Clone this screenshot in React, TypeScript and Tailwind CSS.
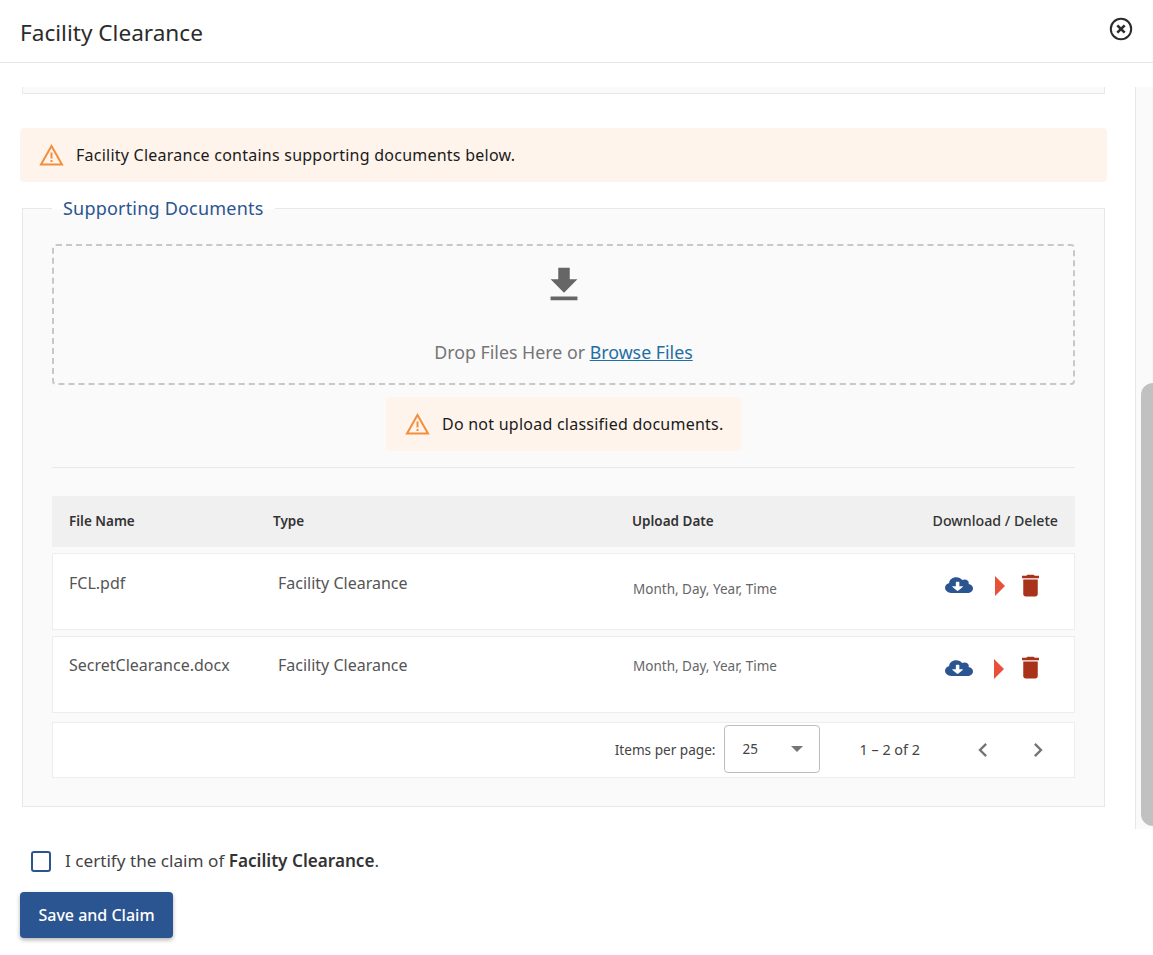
import React from 'react';
import { FaCloudDownloadAlt } from 'react-icons/fa';
import { MdChevronLeft, MdChevronRight, MdDelete, MdFileDownload } from 'react-icons/md';

const WarnIcon = ({ className }: { className: string }) => (
  <svg viewBox="0 0 24 22" className={className} fill="none" stroke="#f28e3c" strokeWidth="2" strokeLinejoin="miter">
    <path d="M12 2 L22.5 20.5 H1.5 Z" />
    <path d="M12 8.5 V14.5" />
    <path d="M12 16 V18" />
  </svg>
);

const files = [
  { name: 'FCL.pdf', textPad: 'pt-[19px]', datePad: 'pt-[26px]', arrow: 'ml-[22px]', trash: 'ml-[11px] -mt-[1px]' },
  { name: 'SecretClearance.docx', textPad: 'pt-[18px]', datePad: 'pt-[20px]', arrow: 'ml-[21px]', trash: 'ml-[12px] -mt-[2px]' },
];

const App = () => {
  return (
    <div className="w-[1153px] h-[955px] overflow-hidden bg-white text-[#333] font-['Noto_Sans',sans-serif]">
      {/* header */}
      <div className="h-[63px] border-b border-[#e6e6e6] flex justify-between pl-5 pr-[20px]">
        <h1 className="text-[22.6px] leading-[32px] pt-[17px] text-[#2b2b2b] box-content">Facility Clearance</h1>
        <svg viewBox="0 0 24 24" className="w-6 h-6 mt-[17px]" fill="none" stroke="#2b2b2b">
          <circle cx="12" cy="12" r="10.2" strokeWidth="2" />
          <path d="M8.3 8.3 L15.7 15.7 M15.7 8.3 L8.3 15.7" strokeWidth="2.6" />
        </svg>
      </div>

      <div className="flex h-[766px] pt-6">
        <div className="w-[1135px] pl-5 shrink-0">
          {/* clipped card above */}
          <div className="ml-[2px] w-[1083px] h-[7px] bg-[#fafafa] border border-t-0 border-[#e8e8e8]" />

          <div className="mt-[34px] w-[1087px] h-[54px] bg-[#fff4ec] rounded flex items-center pl-[19px]">
            <WarnIcon className="w-[25px] h-[22px]" />
            <span className="ml-3 text-[16px] text-[#1a1a1a] tracking-[0.24px]">Facility Clearance contains supporting documents below.</span>
          </div>

          {/* supporting documents */}
          <div className="relative mt-[26px] ml-[2px] w-[1083px] h-[599px] bg-[#fafafa] border border-[#e8e8e8] pt-[35px] px-[29px]">
            <div className="absolute left-[29px] -top-[15px] h-[30px] pt-[1px] bg-[linear-gradient(to_bottom,#ffffff_50%,transparent_50%)] px-[11px] text-[18px] leading-[26px] text-[#2b5590] tracking-[0.2px]">
              Supporting Documents
            </div>

            <div className="h-[141px] border-2 border-dashed border-[#c8c8c8] rounded flex flex-col items-center">
              <MdFileDownload className="mt-[16px] text-[#666] w-[46px] h-[46px]" />
              <div className="mt-[32px] text-[17.8px] leading-6 text-[#757575]">
                Drop Files Here or <a className="text-[#1f6fa3] underline">Browse Files</a>
              </div>
            </div>

            <div className="flex justify-center mt-3">
              <div className="w-[355px] h-[54px] bg-[#fff4ec] rounded flex items-center pl-[19px]">
                <WarnIcon className="w-[25px] h-[22px]" />
                <span className="ml-3 text-[16px] text-[#1a1a1a] tracking-[0.24px]">Do not upload classified documents.</span>
              </div>
            </div>

            <div className="mt-4 border-t border-[#e8e8e8]" />

            {/* table */}
            <div className="mt-7 h-[51px] bg-[#f0f0f0] flex items-center text-[13.5px] font-semibold text-[#333]">
              <div className="w-[221px] pl-[17px]">File Name</div>
              <div className="w-[359px]">Type</div>
              <div className="flex-1">Upload Date</div>
              <div className="pr-[17px] pb-[2px] text-[14.2px] font-medium">Download / Delete</div>
            </div>

            <div className="mt-[6px] flex flex-col gap-[6px]">
              {files.map((f) => (
                <div key={f.name} className="h-[77px] bg-white border border-[#ededed] flex items-start">
                  <div className={`w-[225px] pl-[16px] ${f.textPad} text-[16px] leading-5 text-[#555]`}>{f.name}</div>
                  <div className={`w-[355px] ${f.textPad} text-[16px] leading-5 text-[#555]`}>Facility Clearance</div>
                  <div className={`w-[312px] ${f.datePad} text-[13.5px] leading-[18px] text-[#666]`}>Month, Day, Year, Time</div>
                  <div className="flex items-start pt-[18px]">
                    <FaCloudDownloadAlt preserveAspectRatio="none" className="w-[28px] h-[18px] mt-[4px] text-[#2b5590]" />
                    <svg viewBox="0 0 10 20" className={`${f.arrow} w-[10px] h-[20px] mt-[4px]`}>
                      <polygon points="0,0 10,10 0,20" fill="#e9503a" />
                    </svg>
                    <MdDelete className={`${f.trash} w-[29px] h-[29px] text-[#a8321a]`} />
                  </div>
                </div>
              ))}
            </div>

            {/* paginator */}
            <div className="mt-[9px] h-[56px] bg-white border border-[#ededed] flex items-center justify-end text-[13.6px] text-[#444]">
              <span>Items per page:</span>
              <div className="ml-[9px] mb-[2px] w-[96px] h-[48px] border border-[#bdbdbd] rounded flex items-center justify-between pl-[17px] pr-[16px] text-[13.5px]">
                <span>25</span>
                <span className="w-0 h-0 border-x-[6px] border-x-transparent border-t-[6px] border-t-[#757575]" />
              </div>
              <span className="ml-[39px] text-[14.4px]">1 – 2 of 2</span>
              <MdChevronLeft className="ml-[49px] w-7 h-7 text-[#757575]" />
              <MdChevronRight className="ml-[27px] mr-[22px] w-7 h-7 text-[#757575]" />
            </div>
          </div>
        </div>

        {/* scrollbar */}
        <div className="w-[18px] h-[742px] bg-[#fafafa] border-l border-[#e8e8e8] pl-[5px] pt-[296px]">
          <div className="w-[12px] h-[443px] bg-[#c1c1c1] rounded-l-full rounded-r-none" />
        </div>
      </div>

      {/* footer */}
      <div className="pl-5">
        <div className="flex items-center h-[22px] mt-[21px] ml-[11px]">
          <div className="w-[20px] h-[21px] border-2 border-[#2b5590] rounded-[3px] bg-white" />
          <span className="ml-[14px] text-[17.15px] text-[#444]">
            I certify the claim of <b className="font-semibold text-[#333]">Facility Clearance</b>.
          </span>
        </div>
        <button className="mt-[20px] w-[153px] h-[46px] bg-[#2b5590] rounded text-white text-[16px] font-medium shadow-[0_2px_4px_rgba(0,0,0,0.3)]">
          Save and Claim
        </button>
      </div>
    </div>
  );
};

export default App;
